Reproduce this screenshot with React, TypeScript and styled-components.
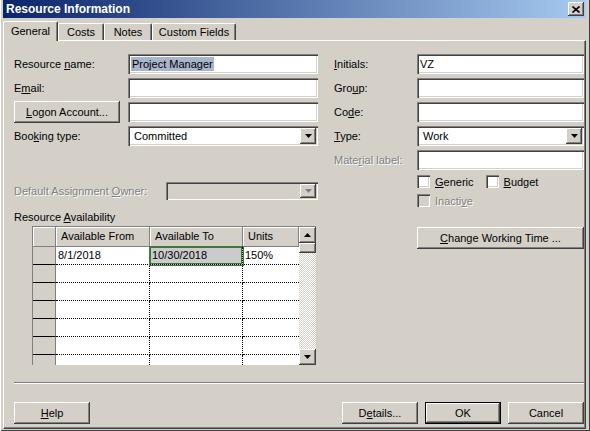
import React from 'react';
import styled, { createGlobalStyle, css } from 'styled-components';

const face = '#d4d0c8';
const shade = '#808080';
const dark = '#404040';

const GlobalStyle = createGlobalStyle`
  html, body {
    margin: 0;
    padding: 0;
    background: ${face};
  }
  body {
    font-family: "Liberation Sans", Arial, sans-serif;
    font-size: 11px;
    color: #000;
  }
`;

const raised = css`
  background: ${face};
  box-shadow: inset -1px -1px ${dark}, inset 1px 1px #fff,
    inset -2px -2px ${shade}, inset 2px 2px ${face};
`;

const sunken = css`
  box-shadow: inset 1px 1px ${shade}, inset 2px 2px ${dark},
    inset -1px -1px #fff, inset -2px -2px ${face};
`;

const Window = styled.div`
  width: 590px;
  height: 431px;
  box-sizing: border-box;
  display: flex;
  flex-direction: column;
  padding: 0 4px 2px 3px;
  background: ${face};
  box-shadow: inset 1px 0 #fff, inset -1px -1px ${dark};
`;

const TitleBar = styled.div`
  height: 18px;
  flex: none;
  display: flex;
  align-items: center;
  justify-content: space-between;
  padding: 0 2px 0 3px;
  background: linear-gradient(to right, #0a246a, #a6caf0);
  color: #fff;
  font-weight: bold;
  font-size: 12px;
`;

const CloseButton = styled.div`
  width: 16px;
  height: 14px;
  display: flex;
  align-items: center;
  justify-content: center;
  ${raised};
`;

const TabRow = styled.div`
  height: 22px;
  flex: none;
  display: flex;
  align-items: flex-end;
  position: relative;
  z-index: 1;
`;

const Tab = styled.div<{ $w: number; $active?: boolean }>`
  width: ${(p) => p.$w}px;
  height: ${(p) => (p.$active ? 20 : 17)}px;
  margin-bottom: ${(p) => (p.$active ? -1 : 0)}px;
  box-sizing: border-box;
  display: flex;
  align-items: center;
  justify-content: center;
  padding-bottom: ${(p) => (p.$active ? 2 : 0)}px;
  background: ${face};
  border-top: 1px solid #fff;
  border-left: 1px solid #fff;
  border-right: 1px solid ${dark};
  border-radius: 2px 2px 0 0;
  box-shadow: inset -1px 0 ${shade};
`;

const Panel = styled.div`
  flex: 1;
  display: flex;
  flex-direction: column;
  border-top: 1px solid #fff;
  border-left: 1px solid #fff;
  border-right: 1px solid ${dark};
  border-bottom: 1px solid ${dark};
  box-shadow: inset -1px -1px ${shade};
  padding: 13px 1px 4px 10px;
`;

const Top = styled.div`
  display: grid;
  grid-template-columns: 304px 250px;
  column-gap: 16px;
`;

const Column = styled.div`
  display: flex;
  flex-direction: column;
`;

const Indented = styled.div<{ $indent: number }>`
  display: flex;
  flex-direction: column;
  padding-left: ${(p) => p.$indent}px;
`;

const FormGrid = styled.div<{ $label: number }>`
  display: grid;
  grid-template-columns: ${(p) => p.$label}px 1fr;
  grid-auto-rows: 20px;
  row-gap: 4px;
  align-items: center;
`;

const Label = styled.span<{ $disabled?: boolean }>`
  white-space: nowrap;
  color: ${(p) => (p.$disabled ? shade : '#000')};
  text-shadow: ${(p) => (p.$disabled ? '1px 1px 0 #fff' : 'none')};
`;

const Key = styled.span`
  text-decoration: underline;
`;

const Field = styled.div<{ $disabled?: boolean; $h?: number }>`
  height: ${(p) => p.$h ?? 20}px;
  box-sizing: border-box;
  display: flex;
  align-items: stretch;
  padding-left: 2px;
  background: ${(p) => (p.$disabled ? face : '#fff')};
  white-space: nowrap;
  overflow: hidden;
  ${sunken};
`;

const FieldText = styled.span<{ $pad?: number }>`
  flex: 1;
  display: flex;
  align-items: center;
  padding-left: ${(p) => p.$pad ?? 1}px;
`;

const Selection = styled.span`
  background: #a9b5cd;
  padding: 0 1px;
  line-height: 14px;
`;

const DropButton = styled.div`
  width: 16px;
  margin: 2px;
  display: flex;
  align-items: center;
  justify-content: center;
  ${raised};
`;

const PushButton = styled.button<{ $w: number; $default?: boolean }>`
  width: ${(p) => p.$w}px;
  height: 22px;
  box-sizing: border-box;
  padding: 0;
  font: inherit;
  color: #000;
  border: ${(p) => (p.$default ? '1px solid #000' : 'none')};
  ${raised};
`;

const LogonButton = styled(PushButton)`
  margin: -1px 0;
`;

const CheckRow = styled.div<{ $top: number }>`
  display: flex;
  align-items: center;
  gap: 12px;
  height: 13px;
  margin-top: ${(p) => p.$top}px;
`;

const CheckItem = styled.label<{ $disabled?: boolean }>`
  display: flex;
  align-items: center;
  gap: 5px;
  color: ${(p) => (p.$disabled ? shade : '#000')};
  text-shadow: ${(p) => (p.$disabled ? '1px 1px 0 #fff' : 'none')};
`;

const CheckBox = styled.span<{ $disabled?: boolean }>`
  width: 13px;
  height: 13px;
  box-sizing: border-box;
  background: ${(p) => (p.$disabled ? face : '#fff')};
  ${sunken};
`;

const WideButtonSlot = styled.div`
  margin-top: 20px;
`;

const OwnerRow = styled.div`
  display: flex;
  align-items: center;
  justify-content: space-between;
  height: 18px;
  margin-top: 36px;
`;

const OwnerCombo = styled.div`
  width: 152px;
`;

const SectionLabel = styled.div`
  margin-top: 10px;
  margin-bottom: 2px;
  height: 14px;
  line-height: 14px;
`;

const TableBox = styled.div`
  margin-left: 18px;
  width: 284px;
  height: 139px;
  box-sizing: border-box;
  border-top: 1px solid ${shade};
  border-left: 1px solid ${shade};
  display: flex;
  overflow: hidden;
  background: #fff;
`;

const TableGrid = styled.div`
  width: 266px;
  flex: none;
  display: grid;
  grid-template-columns: 23px 94px 93px 56px;
  grid-template-rows: 20px;
  grid-auto-rows: 18px;
  align-content: start;
`;

const HeadCell = styled.div`
  box-sizing: border-box;
  background: ${face};
  border-right: 1px solid ${shade};
  border-bottom: 1px solid ${shade};
  box-shadow: inset 1px 1px #fff;
  padding-left: 5px;
  line-height: 19px;
  white-space: nowrap;
`;

const RowHead = styled.div`
  box-sizing: border-box;
  background: ${face};
  border-right: 1px solid ${shade};
  border-bottom: 1px solid #000;
`;

const Cell = styled.div<{ $last?: boolean; $selected?: boolean }>`
  box-sizing: border-box;
  background: ${(p) => (p.$selected ? '#cbcbcb' : '#fff')};
  border-right: ${(p) => (p.$last ? 'none' : '1px dotted #000')};
  border-bottom: 1px dotted #000;
  padding-left: 2px;
  line-height: 17px;
  white-space: nowrap;
  ${(p) =>
    p.$selected &&
    css`
      position: relative;
      z-index: 1;
      box-shadow: 0 0 0 1px #3b7a3b, inset 0 0 0 1px #3b7a3b;
    `}
`;

const ScrollBar = styled.div`
  width: 17px;
  flex: none;
  display: flex;
  flex-direction: column;
  background-color: #fff;
  background-image: conic-gradient(${face} 25%, #fff 0 50%, ${face} 0 75%, #fff 0);
  background-size: 2px 2px;
`;

const ScrollButton = styled.div`
  height: 16px;
  flex: none;
  display: flex;
  align-items: center;
  justify-content: center;
  ${raised};
`;

const Thumb = styled.div`
  height: 10px;
  flex: none;
  ${raised};
`;

const Track = styled.div`
  flex: 1;
`;

const Separator = styled.div`
  margin-top: 17px;
  border-top: 1px solid ${shade};
  border-bottom: 1px solid #fff;
`;

const Footer = styled.div`
  margin-top: 18px;
  display: flex;
  gap: 7px;
`;

const Spacer = styled.div`
  flex: 1;
`;

const Arrow = ({ up, disabled }: { up?: boolean; disabled?: boolean }) => (
  <svg width="7" height="4" viewBox="0 0 7 4">
    <path
      d={up ? 'M3.5 0 L7 4 L0 4 Z' : 'M0 0 L7 0 L3.5 4 Z'}
      fill={disabled ? shade : '#000'}
    />
  </svg>
);

const CloseGlyph = () => (
  <svg width="8" height="7" viewBox="0 0 8 7">
    <path d="M0.5 0.5 L7.5 6.5 M7.5 0.5 L0.5 6.5" stroke="#000" strokeWidth="1.6" />
  </svg>
);

const Combo = ({
  value,
  disabled,
  h,
}: {
  value?: string;
  disabled?: boolean;
  h?: number;
}) => (
  <Field $disabled={disabled} $h={h}>
    <FieldText $pad={4}>{value}</FieldText>
    <DropButton>
      <Arrow disabled={disabled} />
    </DropButton>
  </Field>
);

const rows = [
  ['8/1/2018', '10/30/2018', '150%'],
  ['', '', ''],
  ['', '', ''],
  ['', '', ''],
  ['', '', ''],
  ['', '', ''],
  ['', '', ''],
];

export default function App() {
  return (
    <>
      <GlobalStyle />
      <Window>
        <TitleBar>
          <span>Resource Information</span>
          <CloseButton>
            <CloseGlyph />
          </CloseButton>
        </TitleBar>
        <TabRow>
          <Tab $w={55} $active>General</Tab>
          <Tab $w={46}>Costs</Tab>
          <Tab $w={48}>Notes</Tab>
          <Tab $w={84}>Custom Fields</Tab>
        </TabRow>
        <Panel>
          <Top>
            <Column>
              <FormGrid $label={114}>
                <Label>
                  Resource <Key>n</Key>ame:
                </Label>
                <Field>
                  <FieldText>
                    <Selection>Project Manager</Selection>
                  </FieldText>
                </Field>
                <Label>
                  E<Key>m</Key>ail:
                </Label>
                <Field />
                <div>
                  <LogonButton $w={106}>
                    <Key>L</Key>ogon Account...
                  </LogonButton>
                </div>
                <Field />
                <Label>
                  Boo<Key>k</Key>ing type:
                </Label>
                <Combo value="Committed" />
              </FormGrid>
              <OwnerRow>
                <Label $disabled>
                  Default Assignment <Key>O</Key>wner:
                </Label>
                <OwnerCombo>
                  <Combo disabled h={18} />
                </OwnerCombo>
              </OwnerRow>
              <SectionLabel>
                Resource <Key>A</Key>vailability
              </SectionLabel>
              <TableBox>
                <TableGrid>
                  <HeadCell />
                  <HeadCell>Available From</HeadCell>
                  <HeadCell>Available To</HeadCell>
                  <HeadCell>Units</HeadCell>
                  {rows.map((r, i) => (
                    <React.Fragment key={i}>
                      <RowHead />
                      <Cell>{r[0]}</Cell>
                      <Cell $selected={i === 0}>{r[1]}</Cell>
                      <Cell $last>{r[2]}</Cell>
                    </React.Fragment>
                  ))}
                </TableGrid>
                <ScrollBar>
                  <ScrollButton>
                    <Arrow up />
                  </ScrollButton>
                  <Thumb />
                  <Track />
                  <ScrollButton>
                    <Arrow />
                  </ScrollButton>
                </ScrollBar>
              </TableBox>
            </Column>
            <Column>
              <FormGrid $label={83}>
                <Label>
                  <Key>I</Key>nitials:
                </Label>
                <Field>
                  <FieldText>VZ</FieldText>
                </Field>
                <Label>
                  Gro<Key>u</Key>p:
                </Label>
                <Field />
                <Label>
                  Co<Key>d</Key>e:
                </Label>
                <Field />
                <Label>
                  <Key>T</Key>ype:
                </Label>
                <Combo value="Work" />
                <Label $disabled>
                  Mate<Key>r</Key>ial label:
                </Label>
                <Field />
              </FormGrid>
              <Indented $indent={83}>
                <CheckRow $top={5}>
                  <CheckItem>
                    <CheckBox />
                    <span>
                      <Key>G</Key>eneric
                    </span>
                  </CheckItem>
                  <CheckItem>
                    <CheckBox />
                    <span>
                      <Key>B</Key>udget
                    </span>
                  </CheckItem>
                </CheckRow>
                <CheckRow $top={6}>
                  <CheckItem $disabled>
                    <CheckBox $disabled />
                    <span>
                      Inacti<Key>v</Key>e
                    </span>
                  </CheckItem>
                </CheckRow>
                <WideButtonSlot>
                  <PushButton $w={167}>
                    <Key>C</Key>hange Working Time ...
                  </PushButton>
                </WideButtonSlot>
              </Indented>
            </Column>
          </Top>
          <Separator />
          <Footer>
            <PushButton $w={76}>
              <Key>H</Key>elp
            </PushButton>
            <Spacer />
            <PushButton $w={76}>
              D<Key>e</Key>tails...
            </PushButton>
            <PushButton $w={76} $default>
              OK
            </PushButton>
            <PushButton $w={76}>Cancel</PushButton>
          </Footer>
        </Panel>
      </Window>
    </>
  );
}
